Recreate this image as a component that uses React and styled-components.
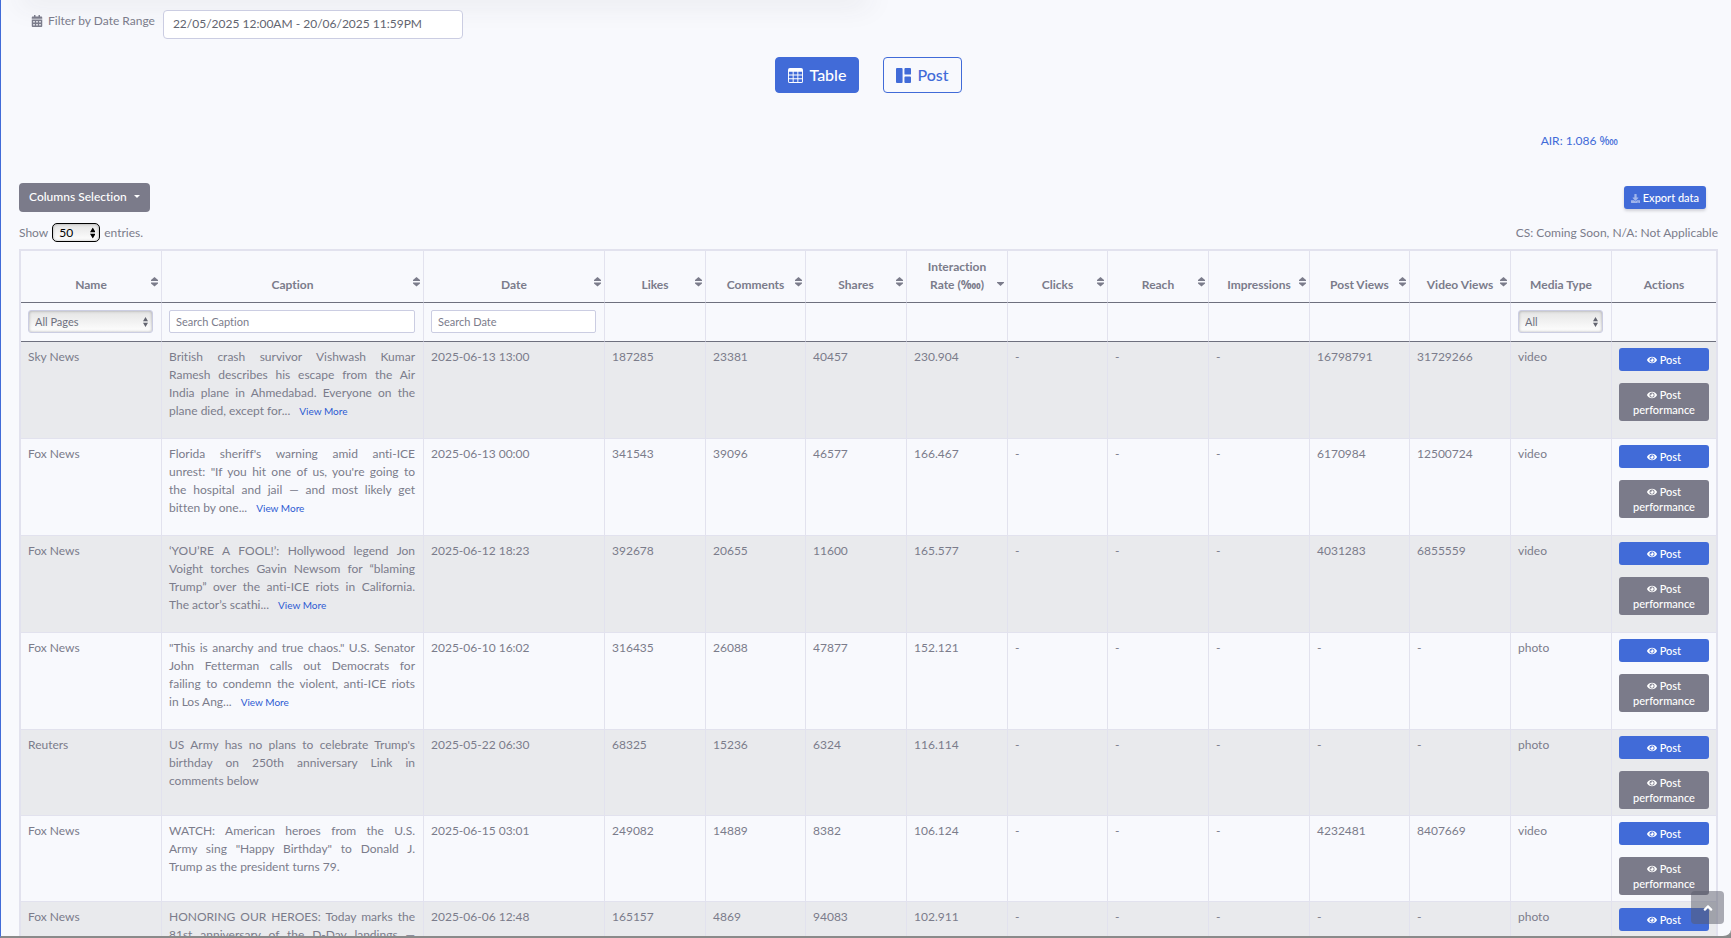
import React, { useState } from 'react';
import styled, { createGlobalStyle, css } from 'styled-components';
import { FaAngleUp, FaCalendarAlt, FaDownload, FaEye } from 'react-icons/fa';
import { BsGrid1X2Fill, BsTable } from 'react-icons/bs';

const BLUE = '#416bd8';
const GREY = '#7b7b8a';
const TEXT = '#7b7c8b';
const LINE = '#e2e2ee';
const DARK_LINE = '#6e707e';
const FIELD_LINE = '#cbcde2';

const GlobalStyle = createGlobalStyle`
  * {
    box-sizing: border-box;
  }
  body {
    margin: 0;
    background: #8a8a8a;
    color: ${TEXT};
    font-family: Lato, 'Noto Sans', 'DejaVu Sans', sans-serif;
    font-size: 12px;
    font-variant-ligatures: none;
    line-height: 18px;
  }
  button,
  input,
  select {
    font: inherit;
    font-variant-ligatures: none;
  }
`;

const Page = styled.main`
  height: 100vh;
  padding: 10px 13px 0 18px;
  overflow: hidden;
  border-left: 1px solid ${BLUE};
  border-bottom: 2px solid #8a8a8a;
  border-bottom-right-radius: 8px;
  background: #f8f9fd;
`;

const CardShadow = styled.div`
  width: 50%;
  height: 10px;
  margin: -20px 0 10px;
  box-shadow: 0 2px 28px rgba(58, 59, 69, 0.15);
`;

const FilterBar = styled.div`
  position: relative;
  display: flex;
  align-items: flex-start;
  gap: 8px;
  padding-left: 12px;
`;

const FilterLabel = styled.label`
  display: flex;
  align-items: center;
  gap: 5px;
  padding-top: 2px;
`;

const DateInput = styled.input`
  width: 300px;
  height: 29px;
  padding: 0 9px 2px;
  border: 1px solid ${FIELD_LINE};
  border-radius: 4px;
  background: #fff;
  color: #62646f;
`;

const ViewSwitch = styled.div`
  display: flex;
  justify-content: center;
  gap: 24px;
  margin-top: 18px;
`;

const ViewButton = styled.button`
  display: flex;
  align-items: center;
  gap: 6px;
  height: 36px;
  padding: 0 12px;
  border: 1px solid ${BLUE};
  border-radius: 4px;
  background: transparent;
  color: ${BLUE};
  font-size: 16px;
  font-weight: 500;

  ${(props) =>
    props.$active &&
    css`
      background: ${BLUE};
      color: #fff;
    `}
`;

const AirLink = styled.a`
  display: block;
  margin: 39px 100px 33px 0;
  color: ${BLUE};
  text-align: right;
  text-decoration: none;
`;

const Toolbar = styled.div`
  display: flex;
  align-items: center;
  justify-content: space-between;
  padding-right: 12px;
`;

const DropdownButton = styled.button`
  display: flex;
  align-items: center;
  gap: 7px;
  height: 29px;
  padding: 0 10px 2px;
  border: 0;
  border-radius: 4px;
  background: ${GREY};
  color: #fff;
  font-weight: 500;
`;

const Caret = styled.span`
  border: 3px solid transparent;
  border-top-color: currentColor;
  border-bottom: 0;
`;

const SmallButton = styled.button`
  display: block;
  padding: 4px 7px;
  border: 0;
  border-radius: 3px;
  background: ${(props) => (props.$grey ? GREY : BLUE)};
  color: #fff;
  font-size: 11px;
  font-weight: 500;
  line-height: 15px;

  svg {
    vertical-align: -1px;
  }

  ${(props) =>
    props.$block &&
    css`
      width: 100%;

      & + & {
        margin-top: 12px;
      }
    `}

  ${(props) =>
    props.$raised &&
    css`
      box-shadow: 0 2px 3px rgba(58, 59, 69, 0.2);

      svg {
        opacity: 0.5;
      }
    `}
`;

const InfoRow = styled.div`
  display: flex;
  align-items: center;
  justify-content: space-between;
  margin: 11px 0 7px;
`;

const LengthLabel = styled.label`
  display: flex;
  align-items: center;
  gap: 4px;
`;

const SelectBox = styled.span`
  position: relative;
  display: block;
  width: ${(props) => (props.$dark ? '48px' : '100%')};

  select {
    display: block;
    width: 100%;
    height: ${(props) => (props.$dark ? '19px' : '23px')};
    padding: 0 6px;
    appearance: none;
    border: 1px solid ${(props) => (props.$dark ? '#000' : FIELD_LINE)};
    border-radius: ${(props) => (props.$dark ? '5px' : '3px')};
    background: linear-gradient(#e4e4e4, #fff);
    box-shadow: inset 0 0 3px rgba(0, 0, 0, 0.3);
    color: ${(props) => (props.$dark ? '#000' : '#6e707e')};
    font-size: ${(props) => (props.$dark ? '12px' : '11px')};
    line-height: 15px;
  }

  svg {
    position: absolute;
    top: 50%;
    right: 5px;
    transform: translateY(-50%);
    color: ${(props) => (props.$dark ? '#000' : '#62646f')};
    pointer-events: none;
  }
`;

const SearchInput = styled.input`
  display: block;
  width: 100%;
  height: 23px;
  padding: 0 6px;
  border: 1px solid ${FIELD_LINE};
  border-radius: 2px;
  background: #fff;
  color: #6e707e;
  font-size: 11px;

  &::placeholder {
    color: ${TEXT};
    opacity: 1;
  }
`;

const Table = styled.table`
  width: 100%;
  table-layout: fixed;
  border: 2px solid ${LINE};
  border-collapse: separate;
  border-spacing: 0;

  th,
  td {
    border-right: 1px solid ${LINE};
    border-bottom: 1px solid ${LINE};
  }
  th:last-child,
  td:last-child {
    border-right: 0;
  }
  thead th,
  thead td {
    border-bottom-color: ${DARK_LINE};
  }
`;

const HeadCell = styled.th`
  position: relative;
  padding: 7px 10px 8px;
  vertical-align: bottom;
  font-weight: 700;

  svg {
    position: absolute;
    right: 3px;
    bottom: 15px;
  }
`;

const FilterCell = styled.td`
  height: 39px;
  padding: 7px 8px 8px 7px;
  vertical-align: top;
`;

const Row = styled.tr`
  background: ${(props) => (props.$striped ? '#e9eaed' : 'transparent')};
`;

const Cell = styled.td`
  padding: 6px 7px;
  vertical-align: top;
`;

const CaptionCell = styled(Cell)`
  padding-right: 8px;
`;

const CaptionText = styled.p`
  margin: 0 0 12px;
`;

const CaptionLine = styled.span`
  display: block;
  text-align: justify;

  &:not(:last-child) {
    text-align-last: justify;
  }
`;

const ViewMore = styled.a`
  margin-left: 6px;
  color: #2d5bd3;
  font-size: 10px;
  text-decoration: none;
`;

const ScrollTop = styled.a`
  position: fixed;
  right: 7px;
  bottom: 14px;
  display: flex;
  align-items: center;
  justify-content: center;
  width: 33px;
  height: 33px;
  border-radius: 4px;
  background: rgba(90, 92, 105, 0.5);
  color: #fff;
`;

const COLUMNS = [
  { title: 'Name', width: 141, sort: 'both' },
  { title: 'Caption', width: 262, sort: 'both' },
  { title: 'Date', width: 181, sort: 'both' },
  { title: 'Likes', width: 101, sort: 'both' },
  { title: 'Comments', width: 100, sort: 'both' },
  { title: 'Shares', width: 101, sort: 'both' },
  { title: 'Interaction Rate (‱)', width: 101, sort: 'desc' },
  { title: 'Clicks', width: 100, sort: 'both' },
  { title: 'Reach', width: 101, sort: 'both' },
  { title: 'Impressions', width: 101, sort: 'both' },
  { title: 'Post Views', width: 100, sort: 'both' },
  { title: 'Video Views', width: 101, sort: 'both' },
  { title: 'Media Type', width: 101 },
  { title: 'Actions', width: 104 },
];
const TOTAL_WIDTH = COLUMNS.reduce((sum, column) => sum + column.width, 0);

const POSTS = [
  {
    name: 'Sky News',
    caption: [
      'British crash survivor Vishwash Kumar',
      'Ramesh describes his escape from the Air',
      'India plane in Ahmedabad. Everyone on the',
      'plane died, except for...',
    ],
    more: true,
    values: ['2025-06-13 13:00', '187285', '23381', '40457', '230.904', '-', '-', '-', '16798791', '31729266', 'video'],
  },
  {
    name: 'Fox News',
    caption: [
      "Florida sheriff's warning amid anti-ICE",
      'unrest: "If you hit one of us, you\'re going to',
      'the hospital and jail — and most likely get',
      'bitten by one...',
    ],
    more: true,
    values: ['2025-06-13 00:00', '341543', '39096', '46577', '166.467', '-', '-', '-', '6170984', '12500724', 'video'],
  },
  {
    name: 'Fox News',
    caption: [
      '‘YOU’RE A FOOL!’: Hollywood legend Jon',
      'Voight torches Gavin Newsom for “blaming',
      'Trump” over the anti-ICE riots in California.',
      'The actor’s scathi...',
    ],
    more: true,
    values: ['2025-06-12 18:23', '392678', '20655', '11600', '165.577', '-', '-', '-', '4031283', '6855559', 'video'],
  },
  {
    name: 'Fox News',
    caption: [
      '"This is anarchy and true chaos." U.S. Senator',
      'John Fetterman calls out Democrats for',
      'failing to condemn the violent, anti-ICE riots',
      'in Los Ang...',
    ],
    more: true,
    values: ['2025-06-10 16:02', '316435', '26088', '47877', '152.121', '-', '-', '-', '-', '-', 'photo'],
  },
  {
    name: 'Reuters',
    caption: [
      "US Army has no plans to celebrate Trump's",
      'birthday on 250th anniversary Link in',
      'comments below',
    ],
    values: ['2025-05-22 06:30', '68325', '15236', '6324', '116.114', '-', '-', '-', '-', '-', 'photo'],
  },
  {
    name: 'Fox News',
    caption: [
      'WATCH: American heroes from the U.S.',
      'Army sing "Happy Birthday" to Donald J.',
      'Trump as the president turns 79.',
    ],
    values: ['2025-06-15 03:01', '249082', '14889', '8382', '106.124', '-', '-', '-', '4232481', '8407669', 'video'],
  },
  {
    name: 'Fox News',
    caption: [
      'HONORING OUR HEROES: Today marks the',
      '81st anniversary of the D-Day landings —',
      'when Allied troops stormed the beaches',
      'of Normandy...',
    ],
    more: true,
    values: ['2025-06-06 12:48', '165157', '4869', '94083', '102.911', '-', '-', '-', '-', '-', 'photo'],
  },
];

const SortIcon = ({ direction }) => (
  <svg width="7" height="10" viewBox="0 0 7 10" fill="currentColor" aria-hidden="true">
    {direction === 'both' && <path d="M3.500 0 7 3v1H0V3z" />}
    {direction === 'both' ? (
      <path d="M0 5.500h7v1L3.500 9.500 0 6.500z" />
    ) : (
      <path d="M0 5h7v.8L3.500 9 0 5.800z" />
    )}
  </svg>
);

const StepArrows = ({ size = 8 }) => (
  <svg width={size / 2 + 1} height={size + 2} viewBox="0 0 5 10" fill="currentColor" aria-hidden="true">
    <path d="M2.500 0 5 4.300H0zM0 5.700h5L2.500 10z" />
  </svg>
);

const HeaderFilter = ({ title }) => {
  if (title === 'Name') {
    return (
      <SelectBox>
        <select aria-label="Page" defaultValue="All Pages">
          <option>All Pages</option>
          <option>Sky News</option>
          <option>Fox News</option>
          <option>Reuters</option>
        </select>
        <StepArrows />
      </SelectBox>
    );
  }
  if (title === 'Media Type') {
    return (
      <SelectBox>
        <select aria-label="Media type" defaultValue="All">
          <option>All</option>
          <option>video</option>
          <option>photo</option>
        </select>
        <StepArrows />
      </SelectBox>
    );
  }
  if (title === 'Caption' || title === 'Date') {
    return <SearchInput placeholder={`Search ${title}`} aria-label={`Search ${title}`} />;
  }
  return null;
};

const PostRow = ({ post, striped }) => (
  <Row $striped={striped}>
    <Cell>{post.name}</Cell>
    <CaptionCell>
      <CaptionText>
        {post.caption.map((line, index) => (
          <CaptionLine key={line}>
            {line}{' '}
            {post.more && index === post.caption.length - 1 && (
              <ViewMore href="#more">View More</ViewMore>
            )}
          </CaptionLine>
        ))}
      </CaptionText>
    </CaptionCell>
    {post.values.map((value, index) => (
      <Cell key={COLUMNS[index + 2].title}>{value}</Cell>
    ))}
    <Cell>
      <SmallButton type="button" $block>
        <FaEye size={10} /> Post
      </SmallButton>
      <SmallButton type="button" $block $grey>
        <FaEye size={10} /> Post performance
      </SmallButton>
    </Cell>
  </Row>
);

const App = () => {
  const [view, setView] = useState('table');

  return (
    <>
      <GlobalStyle />
      <Page id="top">
        <CardShadow />
        <FilterBar>
          <FilterLabel htmlFor="date-range">
            <FaCalendarAlt size={12} />
            Filter by Date Range
          </FilterLabel>
          <DateInput id="date-range" defaultValue="22/05/2025 12:00AM - 20/06/2025 11:59PM" />
        </FilterBar>
        <ViewSwitch>
          <ViewButton type="button" $active={view === 'table'} onClick={() => setView('table')}>
            <BsTable size={15} />
            Table
          </ViewButton>
          <ViewButton type="button" $active={view === 'post'} onClick={() => setView('post')}>
            <BsGrid1X2Fill size={15} />
            Post
          </ViewButton>
        </ViewSwitch>
        <AirLink href="#air">AIR: 1.086 ‱</AirLink>
        <Toolbar>
          <DropdownButton type="button">
            Columns Selection
            <Caret />
          </DropdownButton>
          <SmallButton type="button" $raised>
            <FaDownload size={9} /> Export data
          </SmallButton>
        </Toolbar>
        <InfoRow>
          <LengthLabel>
            Show
            <SelectBox $dark>
              <select defaultValue="50">
                <option>10</option>
                <option>25</option>
                <option>50</option>
                <option>100</option>
              </select>
              <StepArrows size={9} />
            </SelectBox>
            entries.
          </LengthLabel>
          <span>CS: Coming Soon, N/A: Not Applicable</span>
        </InfoRow>
        <Table>
          <colgroup>
            {COLUMNS.map((column) => (
              <col key={column.title} style={{ width: `${(column.width / TOTAL_WIDTH) * 100}%` }} />
            ))}
          </colgroup>
          <thead>
            <tr>
              {COLUMNS.map((column) => (
                <HeadCell key={column.title} scope="col">
                  {column.title}
                  {column.sort && <SortIcon direction={column.sort} />}
                </HeadCell>
              ))}
            </tr>
            <tr>
              {COLUMNS.map((column) => (
                <FilterCell key={column.title}>
                  <HeaderFilter title={column.title} />
                </FilterCell>
              ))}
            </tr>
          </thead>
          <tbody>
            {POSTS.map((post, index) => (
              <PostRow key={post.values[0]} post={post} striped={index % 2 === 0} />
            ))}
          </tbody>
        </Table>
        <ScrollTop href="#top" aria-label="Back to top">
          <FaAngleUp size={14} />
        </ScrollTop>
      </Page>
    </>
  );
};

export default App;
